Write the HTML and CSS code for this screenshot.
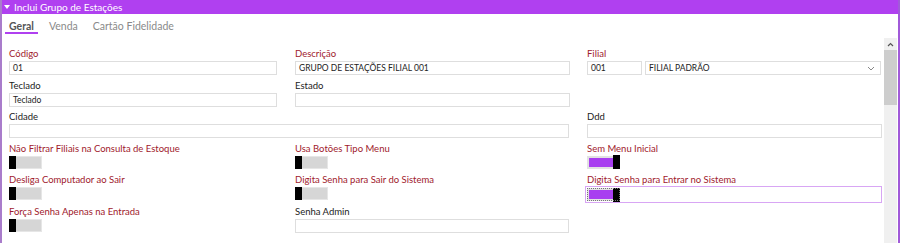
FILE: index.html
```html
<!DOCTYPE html>
<html lang="pt-BR">
<head>
    <meta charset="UTF-8">
    <title>Inclui Grupo de Estações</title>
    <link rel="stylesheet" href="styles.css">
</head>
<body>
    <div class="window">
        <div class="titlebar">
            <span class="caret"></span>
            <span>Inclui Grupo de Estações</span>
        </div>
        <div class="tabs">
            <div class="tab active">Geral</div>
            <div class="tab">Venda</div>
            <div class="tab">Cartão Fidelidade</div>
        </div>
        <div class="body">
            <form class="form">
                <div class="field">
                    <label class="req">Código</label>
                    <div class="input">01</div>
                </div>
                <div class="field">
                    <label class="req">Descrição</label>
                    <div class="input">GRUPO DE ESTAÇÕES FILIAL 001</div>
                </div>
                <div class="field">
                    <label class="req">Filial</label>
                    <div class="pair">
                        <div class="input code">001</div>
                        <div class="input select">
                            <span>FILIAL PADRÃO</span>
                            <svg width="8" height="5" viewBox="0 0 8 5"><polyline points="1,1 4,4 7,1" fill="none" stroke="#888" stroke-width="1"/></svg>
                        </div>
                    </div>
                </div>

                <div class="field">
                    <label>Teclado</label>
                    <div class="input">Teclado</div>
                </div>
                <div class="field">
                    <label>Estado</label>
                    <div class="input"></div>
                </div>
                <div class="field"></div>

                <div class="field wide">
                    <label>Cidade</label>
                    <div class="input"></div>
                </div>
                <div class="field">
                    <label>Ddd</label>
                    <div class="input"></div>
                </div>

                <div class="field">
                    <label class="req">Não Filtrar Filiais na Consulta de Estoque</label>
                    <div class="toggle"><span class="knob"></span></div>
                </div>
                <div class="field">
                    <label class="req">Usa Botões Tipo Menu</label>
                    <div class="toggle"><span class="knob"></span></div>
                </div>
                <div class="field">
                    <label class="req">Sem Menu Inicial</label>
                    <div class="toggle on"><span class="knob"></span></div>
                </div>

                <div class="field">
                    <label class="req">Desliga Computador ao Sair</label>
                    <div class="toggle"><span class="knob"></span></div>
                </div>
                <div class="field">
                    <label class="req">Digita Senha para Sair do Sistema</label>
                    <div class="toggle"><span class="knob"></span></div>
                </div>
                <div class="field">
                    <label class="req">Digita Senha para Entrar no Sistema</label>
                    <div class="focusbox">
                        <div class="toggle on focused"><span class="knob"></span></div>
                    </div>
                </div>

                <div class="field">
                    <label class="req">Força Senha Apenas na Entrada</label>
                    <div class="toggle"><span class="knob"></span></div>
                </div>
                <div class="field">
                    <label>Senha Admin</label>
                    <div class="input"></div>
                </div>
            </form>
            <div class="scrollbar">
                <div class="arrow">
                    <svg width="7" height="5" viewBox="0 0 7 5"><polyline points="1,4 3.5,1.5 6,4" fill="none" stroke="#555" stroke-width="1.2"/></svg>
                </div>
                <div class="thumb"></div>
            </div>
        </div>
    </div>
</body>
</html>
```

FILE: styles.css
```css
body {
    margin: 0;
    font-family: Lato, "Open Sans", sans-serif;
    background-color: #fff;
}
.window {
    width: 900px;
    height: 243px;
    box-sizing: border-box;
    border-left: 2px solid #a97ccb;
    border-right: 2px solid #a15ad9;
    overflow: hidden;
    display: flex;
    flex-direction: column;
}
.titlebar {
    height: 14px;
    background-color: #b040f0;
    color: #fff;
    font-size: 10px;
    line-height: 14px;
    display: flex;
    align-items: center;
    gap: 4px;
    padding-left: 3px;
    margin-left: -2px;
    margin-right: -2px;
}
.caret {
    width: 0;
    height: 0;
    border-left: 3px solid transparent;
    border-right: 3px solid transparent;
    border-top: 4px solid #fff;
    margin-left: 1px;
}
.tabs {
    height: 24px;
    display: flex;
    padding-left: 3px;
}
.tab {
    font-size: 10.5px;
    color: #8a8a8a;
    padding: 5px 4px 0 4px;
    margin-right: 7px;
    line-height: 15px;
}
.tab.active {
    color: #555;
    font-weight: 700;
    border-bottom: 2px solid #b040f0;
    height: 13px;
}
.body {
    flex: 1;
    display: flex;
}
.form {
    flex: 1;
    display: grid;
    grid-template-columns: 268px 274px 1fr;
    column-gap: 18px;
    grid-auto-rows: 31.5px;
    padding: 6px 3px 0 7px;
    align-content: start;
}
.form .field:nth-child(3n+2) {
    margin-right: -1px;
}
.field.wide {
    grid-column: span 2;
}
.field label {
    display: block;
    font-size: 9.5px;
    line-height: 19px;
    height: 17px;
    color: #222;
}
.field label.req {
    color: #a0202c;
}
.input {
    height: 14px;
    box-sizing: border-box;
    border: 1px solid #dedede;
    font-size: 8.5px;
    line-height: 12px;
    padding-left: 3px;
    color: #222;
    display: flex;
    align-items: center;
}
.pair {
    display: flex;
    gap: 3px;
}
.input.code {
    width: 55px;
}
.input.select {
    flex: 1;
    justify-content: space-between;
    padding-right: 5px;
}
.toggle {
    width: 33px;
    height: 13px;
    box-sizing: border-box;
    border: 1px solid #e6e6e6;
    background-color: #d6d6d6;
    display: flex;
    align-items: center;
}
.knob {
    width: 7px;
    height: 13px;
    background-color: #000;
    margin-left: -1px;
}
.toggle.on {
    background-color: #a83ff0;
    border: 2px solid #e2e2e2;
    justify-content: flex-end;
}
.toggle.on .knob {
    margin-left: 0;
    margin-right: -2px;
    height: 14px;
}
.focusbox {
    margin: -1px 0 0 -2px;
    height: 17px;
    box-sizing: border-box;
    border: 1px solid #d8a6f4;
    padding: 1px;
}
.toggle.focused {
    outline: 1px dotted #777;
    outline-offset: -1px;
}
.scrollbar {
    width: 13px;
    background-color: #f0f0f0;
    margin-right: 1px;
}
.arrow {
    height: 12px;
    display: flex;
    align-items: center;
    justify-content: center;
}
.thumb {
    height: 55px;
    background-color: #cdcdcd;
}
```
